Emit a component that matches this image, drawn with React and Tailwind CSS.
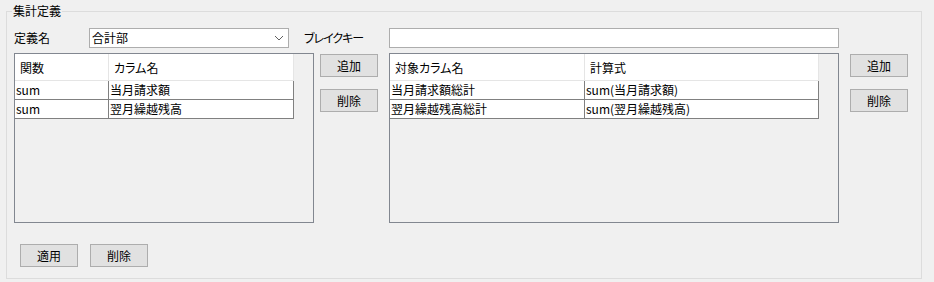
import React from "react";

const font = { fontFamily: '"Noto Sans CJK JP", "Noto Sans", sans-serif' };

function Button({ children, className = "" }) {
  return (
    <button
      className={`flex h-[23px] w-[58px] items-center justify-center border border-[#adadad] bg-[#e1e1e1] text-[12px] leading-none text-black ${className}`}
    >
      {children}
    </button>
  );
}

function Grid({ width, cols, rows }) {
  return (
    <div className={`flex h-[170px] flex-col border border-[#828790] bg-[#f0f0f0] ${width}`}>
      <div className="flex h-[27px] shrink-0">
        {cols.map((c, i) => (
          <div
            key={i}
            className={`flex h-[27px] items-center border-b border-r border-[#e5e5e5] bg-white pl-[5px] pt-[2px] text-[12px] leading-none ${c.w}`}
          >
            {c.label}
          </div>
        ))}
      </div>
      {rows.map((r, ri) => (
        <div key={ri} className="flex h-[19px] shrink-0">
          {r.map((cell, ci) => (
            <div
              key={ci}
              className={`flex h-[19px] items-center border-b border-r border-[#808080] bg-white pl-[1px] text-[12px] leading-none ${cols[ci].w}`}
            >
              {cell}
            </div>
          ))}
        </div>
      ))}
    </div>
  );
}

export default function App() {
  return (
    <div
      className="h-[282px] w-[934px] overflow-hidden bg-[#f0f0f0] text-black [font-feature-settings:'palt']"
      style={font}
    >
      <div className="pt-[11px] pl-[6px]">
        <div className="relative h-[268px] w-[916px] border border-[#dcdcdc]">
          <span className="absolute -top-[9px] left-[5px] bg-[#f0f0f0] px-[1px] text-[12px] leading-[16px]">
            集計定義
          </span>

          <div className="mt-[16px] flex h-[20px] items-center">
            <span className="ml-[7px] w-[75px] text-[12px] leading-none">定義名</span>
            <div className="flex h-[20px] w-[200px] items-center justify-between border border-[#adadad] bg-white pl-[2px] pr-[4px] text-[12px] leading-none">
              <span>合計部</span>
              <svg width="10" height="6" viewBox="0 0 10 6">
                <polyline points="1,1 5,5 9,1" fill="none" stroke="#606060" strokeWidth="1" />
              </svg>
            </div>
            <span className="ml-[15px] w-[85px] text-[12px] leading-none tracking-[-1px]">ブレイクキー</span>
            <div className="h-[20px] w-[450px] border border-[#adadad] bg-white" />
          </div>

          <div className="mt-[5px] flex items-start">
            <div className="ml-[7px]">
              <Grid
                width="w-[300px]"
                cols={[
                  { label: "関数", w: "w-[94px]" },
                  { label: "カラム名", w: "w-[185px]" },
                ]}
                rows={[
                  ["sum", "当月請求額"],
                  ["sum", "翌月繰越残高"],
                ]}
              />
            </div>
            <div className="ml-[6px] mt-[1px] flex flex-col gap-[12px]">
              <Button>追加</Button>
              <Button>削除</Button>
            </div>
            <div className="ml-[11px]">
              <Grid
                width="w-[450px]"
                cols={[
                  { label: "対象カラム名", w: "w-[195px]" },
                  { label: "計算式", w: "w-[234px]" },
                ]}
                rows={[
                  ["当月請求額総計", "sum(当月請求額)"],
                  ["翌月繰越残高総計", "sum(翌月繰越残高)"],
                ]}
              />
            </div>
            <div className="ml-[11px] mt-[1px] flex flex-col gap-[12px]">
              <Button>追加</Button>
              <Button>削除</Button>
            </div>
          </div>

          <div className="mt-[21px] flex">
            <Button className="ml-[13px]">適用</Button>
            <Button className="ml-[12px]">削除</Button>
          </div>
        </div>
      </div>
    </div>
  );
}
